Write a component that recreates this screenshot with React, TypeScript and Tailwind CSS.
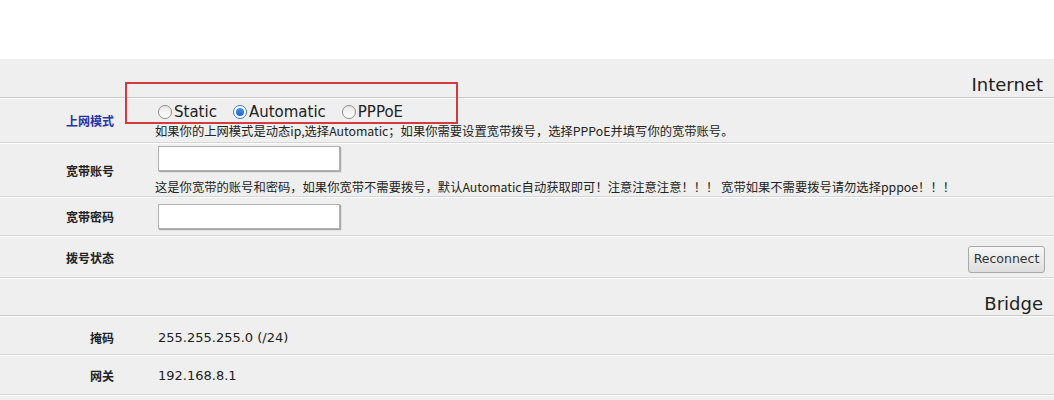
import React from "react";

const sans = "font-['DejaVu_Sans','Noto_Sans_CJK_SC',sans-serif]";
const cjk = "font-['Noto_Sans_CJK_SC',sans-serif]";

function Row({
  label,
  blue,
  labelClass = "mt-[2px]",
  className,
  children,
}: {
  label?: string;
  blue?: boolean;
  labelClass?: string;
  className: string;
  children?: React.ReactNode;
}) {
  return (
    <div className={`flex items-center border-b border-[#d6d6d6] shadow-[0_1px_0_#ffffff] ${className}`}>
      <div
        className={`w-[114px] shrink-0 text-right text-[12px] font-bold ${cjk} ${labelClass} ${
          blue ? "text-[#2535a8]" : "text-[#222]"
        }`}
      >
        {label}
      </div>
      <div className="ml-[41px] flex-1 flex items-center">{children}</div>
    </div>
  );
}

function SectionHead({ title, className }: { title: string; className: string }) {
  return (
    <div
      className={`flex items-end justify-end pr-[11px] border-b border-[#c9c9c9] shadow-[0_1px_0_#ffffff] text-[18px] leading-[20px] text-[#222] ${sans} ${className}`}
    >
      {title}
    </div>
  );
}

function Radio({ label, checked }: { label: string; checked?: boolean }) {
  return (
    <label className="flex items-center">
      {checked ? (
        <span className="size-[14px] rounded-full border border-[#3a78c9] bg-white flex items-center justify-center">
          <span className="size-[8px] rounded-full bg-gradient-to-b from-[#4a93ea] to-[#1b64c9]" />
        </span>
      ) : (
        <span className="size-[14px] rounded-full border border-[#8c8c8c] bg-gradient-to-b from-[#e8e8e8] to-white" />
      )}
      <span className={`ml-[2px] text-[15px] leading-[18px] text-[#222] ${sans}`}>{label}</span>
    </label>
  );
}

function TextBox() {
  return (
    <div className="ml-[3px] w-[182px] h-[25px] bg-white border border-[#b0b0b0] shadow-[1px_1px_1px_rgba(0,0,0,0.3)]" />
  );
}

export default function App() {
  return (
    <div className="w-[1054px] h-[400px] overflow-hidden bg-white">
      <div className="h-[59px]" />
      <div className="relative bg-[#efefef]">
        <SectionHead title="Internet" className="h-[39px] pb-[2px]" />

        <Row label="上网模式" blue className="h-[45px]">
          <div className="flex flex-col pt-[1px]">
            <div className="ml-[3px] flex items-center gap-[16px] h-[20px]">
              <Radio label="Static" />
              <Radio label="Automatic" checked />
              <Radio label="PPPoE" />
            </div>
            <div className={`mt-[1px] text-[12.3px] leading-[17px] text-[#222] ${cjk}`}>
              如果你的上网模式是动态ip,选择Automatic；如果你需要设置宽带拨号，选择PPPoE并填写你的宽带账号。
            </div>
          </div>
        </Row>

        <Row label="宽带账号" className="h-[54px]">
          <div className="flex flex-col pt-[3px]">
            <TextBox />
            <div className={`mt-[8px] text-[12.3px] leading-[17px] text-[#222] ${cjk}`}>
              这是你宽带的账号和密码，如果你宽带不需要拨号，默认Automatic自动获取即可！注意注意注意！！！ 宽带如果不需要拨号请勿选择pppoe！！！
            </div>
          </div>
        </Row>

        <Row label="宽带密码" className="h-[39px]">
          <TextBox />
        </Row>

        <Row label="拨号状态" labelClass="mt-[3px]" className="h-[42px]">
          <div className="flex-1 flex justify-end pr-[9px] mt-[6px]">
            <button
              className={`w-[77px] h-[27px] rounded-[3px] border border-[#a9a9a9] bg-gradient-to-b from-[#f7f7f7] to-[#dedede] text-[12.5px] text-[#333] ${sans}`}
            >
              Reconnect
            </button>
          </div>
        </Row>

        <SectionHead title="Bridge" className="h-[38px] pb-[1px]" />

        <Row label="掩码" labelClass="mt-[6px]" className="h-[39px]">
          <span className={`ml-[3px] mt-[6px] text-[13px] text-[#222] ${sans}`}>255.255.255.0 (/24)</span>
        </Row>

        <Row label="网关" labelClass="mt-[3px]" className="h-[40px]">
          <span className={`ml-[3px] mt-[3px] text-[13px] text-[#222] ${sans}`}>192.168.8.1</span>
        </Row>

        <Row className="h-[40px]" />

        {/* annotation box drawn over the mode row */}
        <div className="absolute left-[125px] top-[23px] w-[333px] h-[42px] border-2 border-[#d33b40]" />
      </div>
    </div>
  );
}
